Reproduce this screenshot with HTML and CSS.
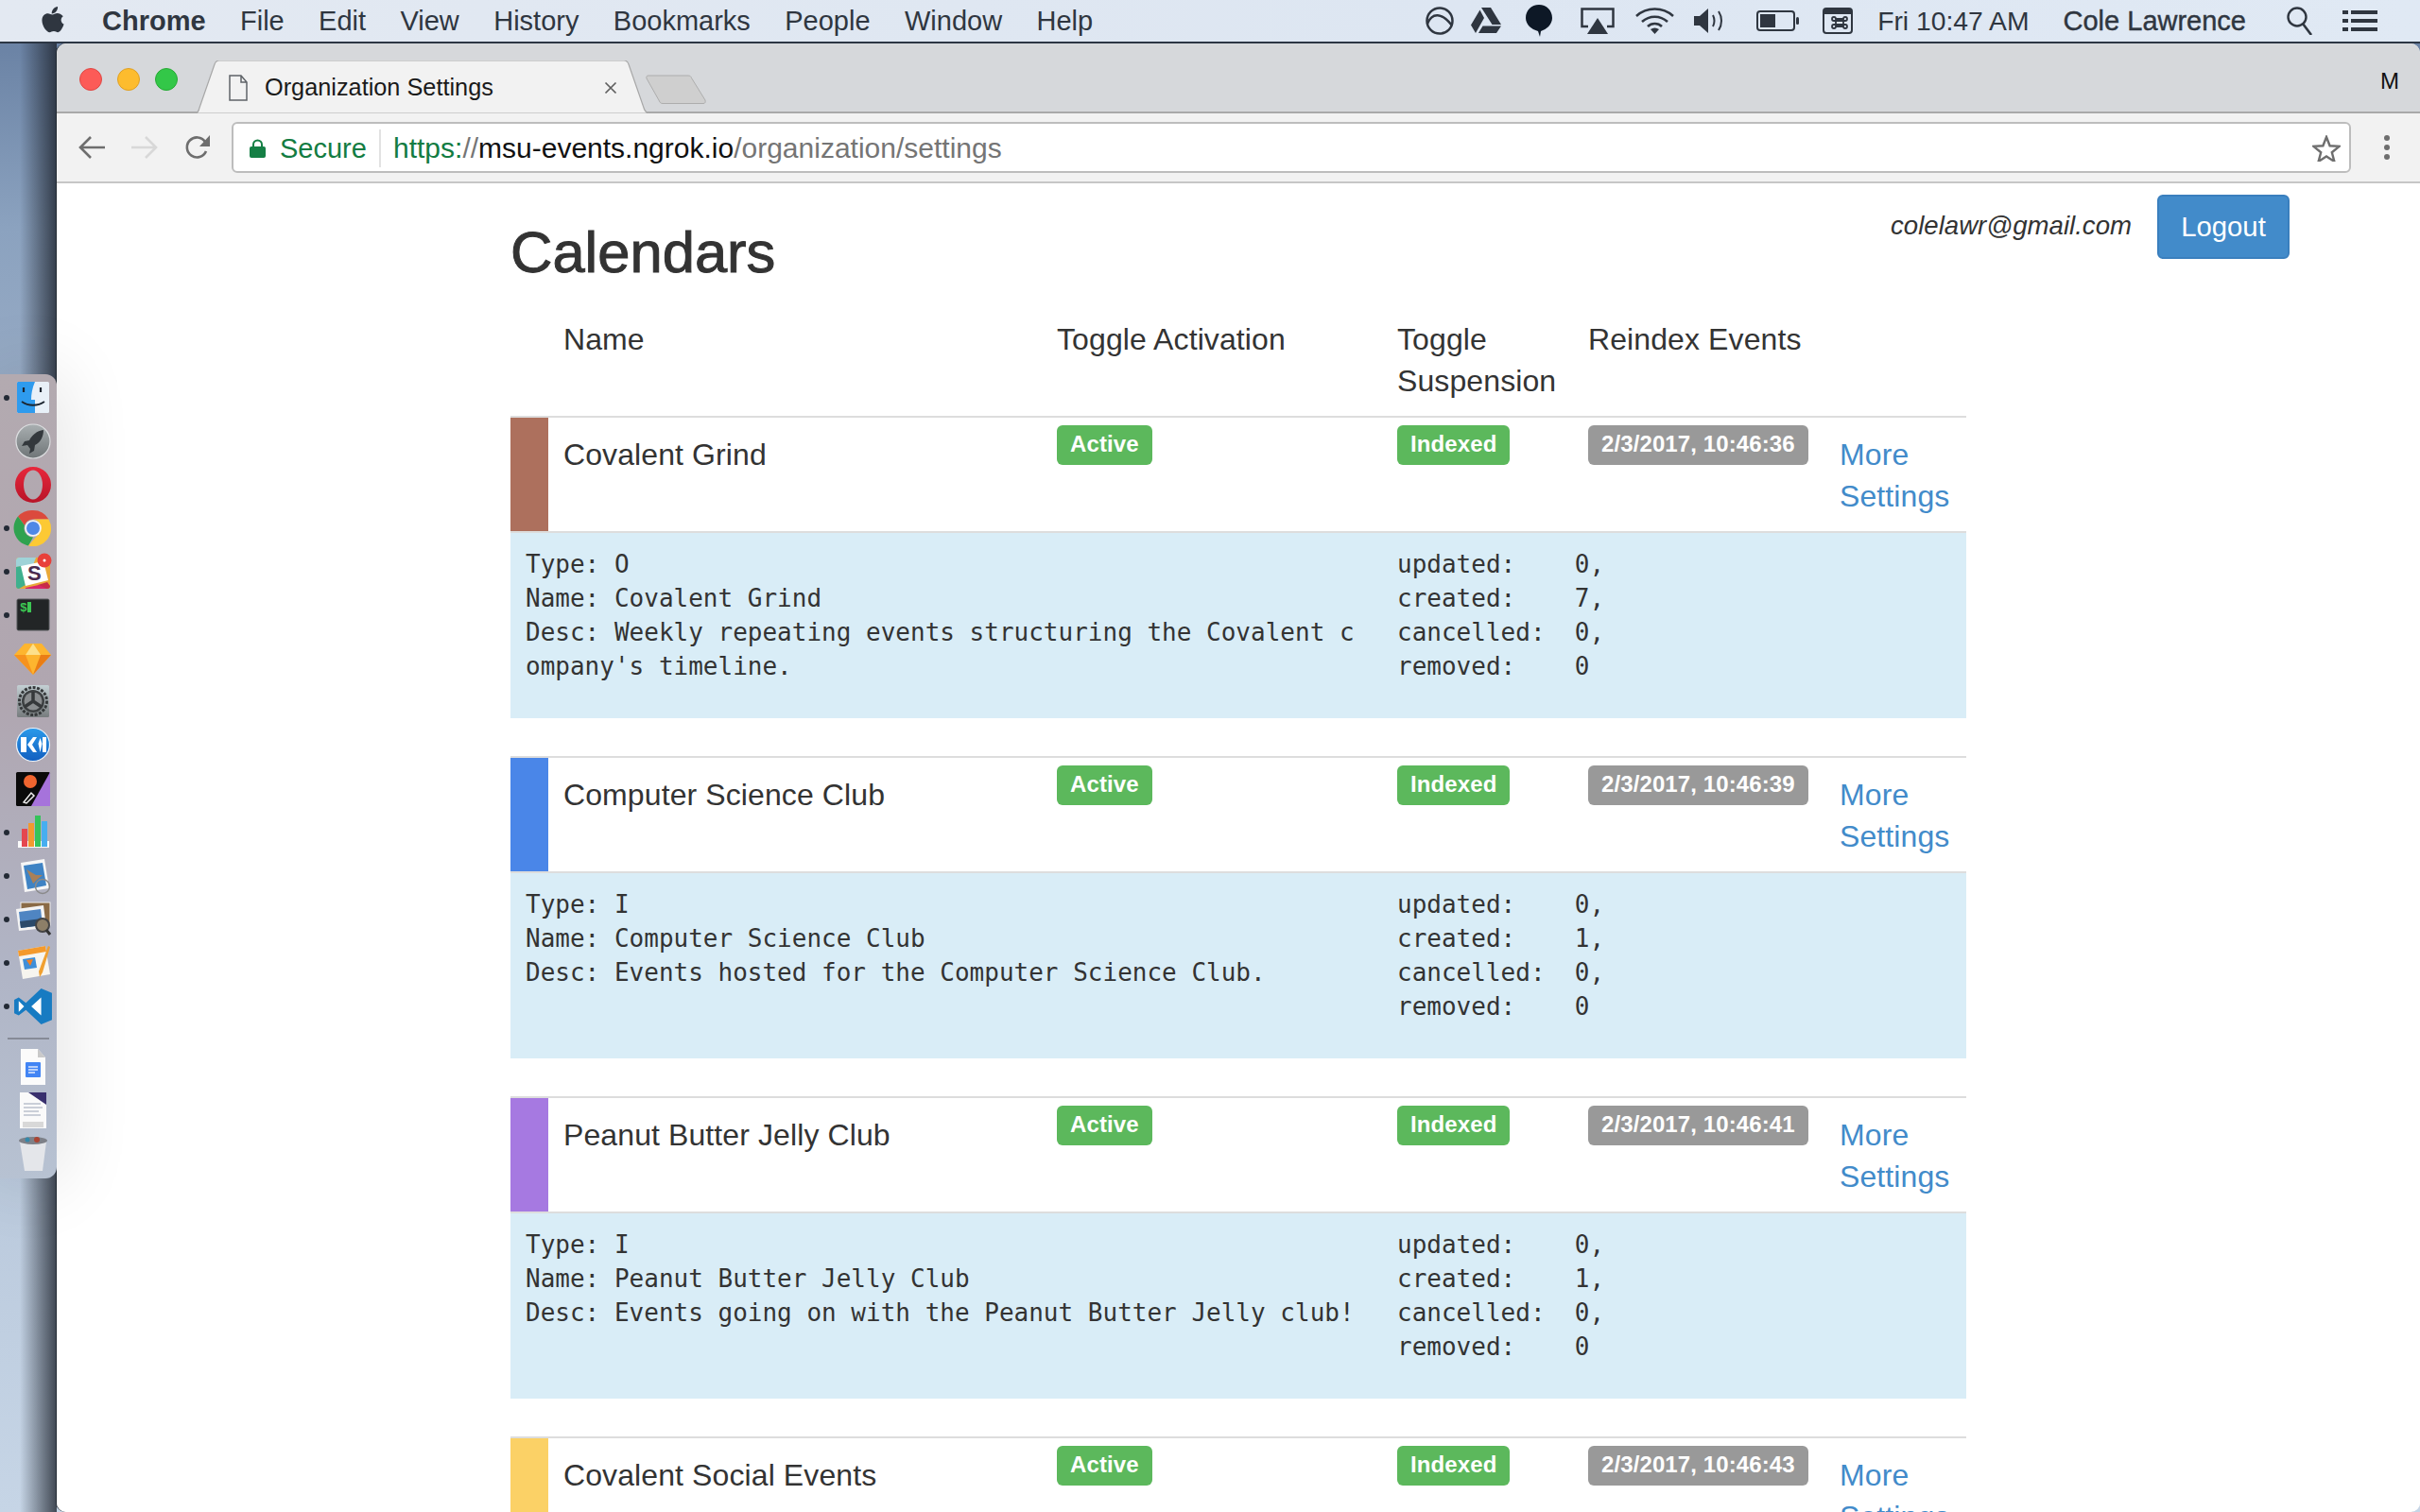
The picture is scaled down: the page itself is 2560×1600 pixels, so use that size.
FILE: index.html
```html
<!DOCTYPE html>
<html lang="en">
<head>
<meta charset="utf-8">
<title>Organization Settings</title>
<link rel="stylesheet" href="styles.css">
</head>
<body>
<div class="desktop">
  <header class="menubar">
    <svg class="apple" viewBox="0 0 24 28"><path fill="#2f3640" d="M17 0c.2 2-.6 3.600-1.600 4.800-1 1.200-2.600 2.100-4.100 2-.2-1.700.6-3.400 1.500-4.500C13.800 1.100 15.600.2 17 0zM22 9.500c-2.600 1.600-2.200 6 .9 7.300-.8 2.800-3.300 7.700-5.700 7.700-1.500 0-2-1-3.900-1-2 0-2.600 1-4 1C6.500 24.500 2 18.500 2 13c0-4.500 3-6.500 5.600-6.500 1.800 0 3 1.200 4.300 1.200 1.200 0 2.700-1.400 4.800-1.400 1.800 0 3.700 1 5.300 2.700z"/></svg>
    <nav class="menus">
      <span class="menu menu-app">Chrome</span>
      <span class="menu">File</span>
      <span class="menu">Edit</span>
      <span class="menu">View</span>
      <span class="menu">History</span>
      <span class="menu">Bookmarks</span>
      <span class="menu">People</span>
      <span class="menu">Window</span>
      <span class="menu">Help</span>
    </nav>
    <div class="status">
      <svg class="st st-ring" viewBox="0 0 30 30"><circle cx="15" cy="15" r="13.500" fill="none" stroke="#2f3640" stroke-width="2.500"/><path d="M2 18C7 6 17 6 28 20" fill="none" stroke="#2f3640" stroke-width="2.500"/></svg>
      <svg class="st st-drive" viewBox="0 0 32 28"><path fill="#2f3640" d="M11 0h10l11 18h-9.500zM9.500 2.500 14 11 5 27 0 18.500zM8 27l4.500-7.500H32L27 27z"/></svg>
      <svg class="st st-balloon" viewBox="0 0 28 34"><path fill="#0d1826" d="M14 0c8 0 14 6 14 14 0 7-6 12-12 14l-1 6-2-6C6 26 0 21 0 14 0 6 6 0 14 0z"/></svg>
      <svg class="st st-air" viewBox="0 0 36 28"><path fill="none" stroke="#2f3640" stroke-width="2.500" d="M8 20H1.500V1.500h33V20H28"/><path fill="#2f3640" d="M18 11l11 17H7z"/></svg>
      <svg class="st st-wifi" viewBox="0 0 43 28"><g fill="none" stroke="#2f3640" stroke-width="2.600"><path d="M2 9c11-10 28-10 39 0"/><path d="M8 15c8-7 19-7 27 0"/><path d="M14 20c4-4 11-4 15 0"/></g><path fill="#2f3640" d="M21.500 28l-4.500-5c3-2 6-2 9 0z"/></svg>
      <svg class="st st-vol" viewBox="0 0 34 26"><path fill="#2f3640" d="M0 8h6l9-8v26l-9-8H0z"/><g fill="none" stroke="#2f3640" stroke-width="2"><path d="M20 7c2 4 2 8 0 12"/><path d="M26 3c4 6 4 14 0 20"/></g></svg>
      <svg class="st st-bat" viewBox="0 0 46 22"><rect x="1" y="1" width="39" height="20" rx="3" fill="none" stroke="#2f3640" stroke-width="2"/><rect x="4" y="4" width="16" height="14" fill="#2f3640"/><rect x="42" y="7" width="3" height="8" rx="1.500" fill="#2f3640"/></svg>
      <svg class="st st-key" viewBox="0 0 32 28"><rect x="1" y="1" width="30" height="26" rx="3" fill="none" stroke="#2f3640" stroke-width="2"/><rect x="1" y="1" width="30" height="6" fill="#2f3640"/><path fill="none" stroke="#2f3640" stroke-width="1.800" d="M14 12h8v8h-8zM14 12a2 2 0 1 0-2 2h12a2 2 0 1 0-2-2v8a2 2 0 1 0 2-2H12a2 2 0 1 0 2 2z"/></svg>
      <span class="clock">Fri 10:47 AM</span>
      <span class="user">Cole Lawrence</span>
      <svg class="st st-search" viewBox="0 0 28 30"><circle cx="11" cy="11" r="9.500" fill="none" stroke="#2f3640" stroke-width="2.400"/><path d="M17 18l9 12" stroke="#2f3640" stroke-width="2.600"/></svg>
      <svg class="st st-list" viewBox="0 0 37 22"><g fill="#2f3640"><rect width="6" height="4"/><rect x="9" width="28" height="4"/><rect y="9" width="6" height="4"/><rect x="9" y="9" width="28" height="4"/><rect y="18" width="6" height="4"/><rect x="9" y="18" width="28" height="4"/></g></svg>
    </div>
  </header>

  <aside class="dock">
    <div class="slot"><i class="dot"></i>
      <svg class="app" viewBox="0 0 38 38"><rect x="2" y="2" width="34" height="33" rx="1.500" fill="#e8f0f8"/><path d="M2 3.500C2 2.600 2.700 2 3.500 2H21c-3 7-4 13-4 19h4v14H3.500C2.700 35 2 34.400 2 33.500z" fill="#2e9bee"/><path d="M9 8v5M27 8v5" stroke="#1c2530" stroke-width="2.200"/><path d="M7 23c7 5 17 5 24 0" fill="none" stroke="#1c2530" stroke-width="1.800"/></svg>
    </div>
    <div class="slot"><i class="dot off"></i>
      <svg class="app" viewBox="0 0 38 38"><defs><linearGradient id="g-rocket" x1="0" y1="0" x2="0" y2="1"><stop offset="0" stop-color="#a9afb1"/><stop offset="1" stop-color="#6f7577"/></linearGradient></defs><circle cx="19" cy="19" r="18" fill="url(#g-rocket)" stroke="#dcdee0" stroke-width="1.200"/><path d="M30 7c-7 1-12 5-15 11l-5 1-3 5 6-1 3 4-1 5 5-3 1-6c6-3 9-9 9-16z" fill="#33383c"/></svg>
    </div>
    <div class="slot"><i class="dot off"></i>
      <svg class="app" viewBox="0 0 38 38"><defs><linearGradient id="g-opera" x1="0" y1="0" x2="0" y2="1"><stop offset="0" stop-color="#e8283c"/><stop offset="1" stop-color="#b81428"/></linearGradient></defs><path fill-rule="evenodd" fill="url(#g-opera)" d="M19 0a19 19 0 1 1 0 38 19 19 0 0 1 0-38zm0 3.500c-5.500 0-10 7-10 15.500s4.500 15.500 10 15.500 10-7 10-15.500S24.500 3.500 19 3.500z"/></svg>
    </div>
    <div class="slot"><i class="dot"></i>
      <svg class="app" viewBox="0 0 38 38"><path fill="#db4a3d" d="M19 0a19 19 0 0 1 16.500 9.500H19a9.500 9.500 0 0 0-9 6.500L3 6.500A19 19 0 0 1 19 0z"/><path fill="#2fa24f" d="M3 6.500 10 16a9.500 9.500 0 0 0 9 12.500L14 37.400A19 19 0 0 1 3 6.500z"/><path fill="#fcc934" d="M35.500 9.500A19 19 0 0 1 14 37.400L24 26a9.500 9.500 0 0 0-5-16.500z"/><circle cx="19" cy="19" r="8.800" fill="#f4f4f4"/><circle cx="19" cy="19" r="7" fill="#4f88e6"/></svg>
    </div>
    <div class="slot"><i class="dot"></i>
      <svg class="app" viewBox="0 0 38 38"><rect x="1" y="4" width="36" height="33" rx="3" fill="#e9a93a"/><path d="M1 7c0-2 1-3 3-3h18l-3 8L1 14z" fill="#9fd3d8"/><path d="M1 14l6-1 4 20-7 4c-2 0-3-1-3-3z" fill="#3fb08e"/><path d="M24 33l10-3 3 4c0 2-1 3-3 3H24z" fill="#c72c48"/><path d="M6 13 30 8l5 20-24 6z" fill="#fff"/><path d="M11 36l14-3 9 4H11z" fill="#d9266b"/><text x="13" y="28" class="slack-s">S</text><circle cx="31" cy="7" r="7.500" fill="#e8403a"/><circle cx="31" cy="7" r="1.500" fill="#fff"/></svg>
    </div>
    <div class="slot"><i class="dot"></i>
      <svg class="app" viewBox="0 0 38 38"><rect x="2" y="2" width="34" height="33" rx="1.500" fill="#222526" stroke="#55585a"/><text x="5" y="15" class="term">$</text><rect x="13" y="5" width="4" height="11" fill="#3cc653"/></svg>
    </div>
    <div class="slot"><i class="dot off"></i>
      <svg class="app" viewBox="0 0 38 38"><path fill="#fdb52f" d="M10 3h18l10 12-19 21L-1 15z"/><path fill="#fde08a" d="M19 3l-8 12h16z"/><path fill="#f6921e" d="M-1 15h12l8 21z"/><path fill="#ea7d15" d="M38 15H27l-8 21z"/></svg>
    </div>
    <div class="slot"><i class="dot off"></i>
      <svg class="app" viewBox="0 0 38 38"><defs><linearGradient id="g-prefs" x1="0" y1="0" x2="0" y2="1"><stop offset="0" stop-color="#c4d0d4"/><stop offset="1" stop-color="#777c7e"/></linearGradient></defs><rect x="2" y="1" width="34" height="34" rx="1.500" fill="url(#g-prefs)"/><circle cx="19" cy="18" r="14.500" fill="none" stroke="#35383a" stroke-width="3" stroke-dasharray="3 1.500"/><circle cx="19" cy="18" r="12" fill="#3d4042"/><circle cx="19" cy="18" r="9.500" fill="#8a8d8f"/><path d="M19 18V8M19 18l-9 6M19 18l9 6" stroke="#35383a" stroke-width="3.500"/></svg>
    </div>
    <div class="slot"><i class="dot off"></i>
      <svg class="app" viewBox="0 0 38 38"><defs><linearGradient id="g-kite" x1="0" y1="0" x2="0" y2="1"><stop offset="0" stop-color="#2a9aea"/><stop offset="1" stop-color="#125fc0"/></linearGradient></defs><circle cx="19" cy="18" r="17.500" fill="url(#g-kite)" stroke="#eaf2fa" stroke-width="1.200"/><path fill="#fff" d="M6 10h6v16H6zM13 18l6-8h4l-5 8 5 8h-4zM29 10h4v16h-4zM26.500 11l2 6-2 9-2-9z"/></svg>
    </div>
    <div class="slot"><i class="dot off"></i>
      <svg class="app" viewBox="0 0 38 38"><rect x="1" y="1" width="36" height="36" rx="1.500" fill="#0a0a0a"/><path d="M37 1v36H17z" fill="#a673db"/><circle cx="16" cy="11" r="7" fill="#f0652f"/><path d="M9 33l8-10 3 3-8 8z" fill="none" stroke="#eee" stroke-width="1.500"/></svg>
    </div>
    <div class="slot"><i class="dot"></i>
      <svg class="app" viewBox="0 0 38 38"><path d="M3 28h33v7H3z" fill="#fafafa"/><rect x="7" y="15" width="6" height="19" fill="#e5474f"/><rect x="14" y="9" width="6" height="25" fill="#f29a2e"/><rect x="21" y="1" width="6" height="33" fill="#35c35a"/><rect x="28" y="7" width="6" height="27" fill="#47aef0"/></svg>
    </div>
    <div class="slot"><i class="dot"></i>
      <svg class="app" viewBox="0 0 38 38"><path d="M6 5l25-4 5 31-26 4z" fill="#f6f6f6"/><path d="M9 8l20-3 4 24-20 4z" fill="#3f83c4"/><path d="M12 12l10 6 7 0-6 5-4 4-3-7z" fill="#a98058"/><circle cx="29" cy="30" r="7.500" fill="none" stroke="#8a8a8a" stroke-width="1.500"/></svg>
    </div>
    <div class="slot"><i class="dot"></i>
      <svg class="app" viewBox="0 0 38 38"><rect x="6" y="1" width="31" height="24" fill="#8a6a46" stroke="#eee"/><path d="M1 8l29-4 3 24-29 3z" fill="#f4f4f4"/><path d="M4 11l23-3 2 17-23 3z" fill="#4f85c2"/><path d="M5 21l23-3 1 7-23 3z" fill="#2b4a6a"/><circle cx="29" cy="25" r="7" fill="#8d7f68" stroke="#444" stroke-width="2"/><path d="M33 30l4 5" stroke="#333" stroke-width="3"/></svg>
    </div>
    <div class="slot"><i class="dot"></i>
      <svg class="app" viewBox="0 0 38 38"><path d="M3 6l29-5 5 30-29 5z" fill="#f7f5ef"/><path d="M3 6l29-5 1 6L4 12z" fill="#f49a2c"/><path d="M8 15l13-2 2 11-13 2z" fill="#3f8fd8"/><path d="M12 16l7-1-3 7z" fill="#f07f22"/><path d="M35 1l2 1-8 27-3 5-1-6z" fill="#f0a030"/></svg>
    </div>
    <div class="slot"><i class="dot"></i>
      <svg class="app app-wide" viewBox="0 0 42 40"><path fill="#177bc2" d="M30 0l12 5v30l-12 5-17-16-8 6-5-2.500V12.500L5 10l8 6z"/><path fill="#fff" d="M5 14v12l6-6zM30 10v20l-11-10z"/></svg>
    </div>
    <div class="dock-sep"></div>
    <div class="slot"><i class="dot off"></i>
      <svg class="app" viewBox="0 0 38 38"><path d="M6 0h18l8 9v29H6z" fill="#fbfbfb"/><path d="M24 0l8 9h-8z" fill="#c9c9c9"/><rect x="11" y="14" width="16" height="16" rx="1" fill="#4285f4"/><path d="M14 19h10M14 22h10M14 25h7" stroke="#dfe9fb" stroke-width="1.300"/></svg>
    </div>
    <div class="slot"><i class="dot off"></i>
      <svg class="app" viewBox="0 0 38 38"><rect x="5" y="0" width="28" height="38" fill="#fafafa"/><path d="M14 0h19v13z" fill="#39306e"/><path d="M9 12h18M9 16h20M9 20h16M9 24h18" stroke="#9aa3b5" stroke-width="1.200"/><rect x="8" y="31" width="22" height="6" fill="#d8d8d8"/></svg>
    </div>
    <div class="slot"><i class="dot off"></i>
      <svg class="app" viewBox="0 0 38 38"><path d="M5 6h28l-4 31H10z" fill="#e4e6ea"/><ellipse cx="19" cy="5" rx="15" ry="4" fill="#7d8088"/><circle cx="13" cy="4" r="2.500" fill="#38a"/><circle cx="23" cy="4" r="3" fill="#a43"/></svg>
    </div>
  </aside>

  <section class="window">
    <div class="tabstrip">
      <i class="light light-r"></i><i class="light light-y"></i><i class="light light-g"></i>
      <div class="tab">
        <svg class="tab-shape" viewBox="0 0 484 56" preserveAspectRatio="none"><path d="M0 56 C4 56 5 54 6 50 L22 4 C23 1 24 0 27 0 H455 C458 0 459 1 460 4 L476 50 C477 54 480 56 484 56z" fill="#f2f2f2" stroke="#a8a8a8" stroke-width="1.200"/></svg>
        <svg class="tab-page" viewBox="0 0 20 28"><path d="M1 1h12l6 7v19H1z M13 1v7h6" fill="none" stroke="#5f6368" stroke-width="1.500"/></svg>
        <span class="tab-title">Organization Settings</span>
        <svg class="tab-close" viewBox="0 0 14 14"><path d="M1.500 1.500l11 11M12.500 1.500l-11 11" stroke="#5f5f5f" stroke-width="1.700"/></svg>
      </div>
      <svg class="newtab" viewBox="0 0 64 31"><path d="M3 1h42c2 0 3 1 3.500 2.500L63 27c.5 2 0 3.500-2 3.500H18c-2 0-3-1-3.500-2.500L1 4C.5 2 1 1 3 1z" fill="#cfcfcf" stroke="#adadad"/></svg>
      <span class="profile">M</span>
    </div>
    <div class="toolbar">
      <svg class="tb tb-back" viewBox="0 0 28 26"><path d="M13 2 2 13l11 11M2 13h26" fill="none" stroke="#6e6e6e" stroke-width="2.600"/></svg>
      <svg class="tb tb-fwd" viewBox="0 0 28 26"><path d="M15 2l11 11-11 11M26 13H0" fill="none" stroke="#d8d8d8" stroke-width="2.600"/></svg>
      <svg class="tb tb-reload" viewBox="0 0 28 26"><path d="M23 17a10.500 10.500 0 1 1-1-10" fill="none" stroke="#6e6e6e" stroke-width="2.600"/><path d="M27 0v12H16z" fill="#6e6e6e"/></svg>
      <div class="omnibox">
        <svg class="lock" viewBox="0 0 17 20"><path d="M4 9V6a4.500 4.500 0 0 1 9 0v3" fill="none" stroke="#157f45" stroke-width="2"/><rect y="8" width="17" height="12" rx="2" fill="#157f45"/></svg>
        <span class="secure">Secure</span>
        <i class="omni-div"></i>
        <span class="url"><span class="u-scheme">https:</span><span class="u-slash">//</span><span class="u-host">msu-events.ngrok.io</span><span class="u-path">/organization/settings</span></span>
        <svg class="star" viewBox="0 0 30 28"><path d="M15 2l3.600 9.300 10 .6-7.800 6.300 2.600 9.700L15 22.500 6.600 27.900l2.600-9.700L1.400 11.900l10-.6z" fill="none" stroke="#6e6e6e" stroke-width="2.400"/></svg>
      </div>
      <div class="kebab"><i></i><i></i><i></i></div>
    </div>
    <div class="page">
      <div class="auth">
        <em class="email">colelawr@gmail.com</em>
        <button class="logout">Logout</button>
      </div>
      <main class="main">
        <h1 class="title">Calendars</h1>
        <div class="cal-head">
          <span class="cell cell-name">Name</span>
          <span class="cell">Toggle Activation</span>
          <span class="cell">Toggle Suspension</span>
          <span class="cell">Reindex Events</span>
        </div>

        <article class="cal">
          <div class="cal-row">
            <i class="swatch swatch-brown"></i>
            <span class="cell">Covalent Grind</span>
            <span class="cell-badge"><span class="badge badge-ok">Active</span></span>
            <span class="cell-badge"><span class="badge badge-ok">Indexed</span></span>
            <span class="cell-badge"><span class="badge badge-time">2/3/2017, 10:46:36</span></span>
            <a class="cell more" href="#">More Settings</a>
          </div>
          <div class="cal-info">
<pre class="info-left">Type: O
Name: Covalent Grind
Desc: Weekly repeating events structuring the Covalent company's timeline.</pre>
<pre class="info-right">updated:    0,
created:    7,
cancelled:  0,
removed:    0</pre>
          </div>
        </article>

        <article class="cal">
          <div class="cal-row">
            <i class="swatch swatch-blue"></i>
            <span class="cell">Computer Science Club</span>
            <span class="cell-badge"><span class="badge badge-ok">Active</span></span>
            <span class="cell-badge"><span class="badge badge-ok">Indexed</span></span>
            <span class="cell-badge"><span class="badge badge-time">2/3/2017, 10:46:39</span></span>
            <a class="cell more" href="#">More Settings</a>
          </div>
          <div class="cal-info">
<pre class="info-left">Type: I
Name: Computer Science Club
Desc: Events hosted for the Computer Science Club.</pre>
<pre class="info-right">updated:    0,
created:    1,
cancelled:  0,
removed:    0</pre>
          </div>
        </article>

        <article class="cal">
          <div class="cal-row">
            <i class="swatch swatch-purple"></i>
            <span class="cell">Peanut Butter Jelly Club</span>
            <span class="cell-badge"><span class="badge badge-ok">Active</span></span>
            <span class="cell-badge"><span class="badge badge-ok">Indexed</span></span>
            <span class="cell-badge"><span class="badge badge-time">2/3/2017, 10:46:41</span></span>
            <a class="cell more" href="#">More Settings</a>
          </div>
          <div class="cal-info">
<pre class="info-left">Type: I
Name: Peanut Butter Jelly Club
Desc: Events going on with the Peanut Butter Jelly club!</pre>
<pre class="info-right">updated:    0,
created:    1,
cancelled:  0,
removed:    0</pre>
          </div>
        </article>

        <article class="cal">
          <div class="cal-row">
            <i class="swatch swatch-yellow"></i>
            <span class="cell">Covalent Social Events</span>
            <span class="cell-badge"><span class="badge badge-ok">Active</span></span>
            <span class="cell-badge"><span class="badge badge-ok">Indexed</span></span>
            <span class="cell-badge"><span class="badge badge-time">2/3/2017, 10:46:43</span></span>
            <a class="cell more" href="#">More Settings</a>
          </div>
        </article>
      </main>
    </div>
  </section>
</div>
</body>
</html>
```

FILE: styles.css
```css
* { box-sizing: border-box; }
html, body { margin: 0; padding: 0; }
body { font-family: "Liberation Sans", Arial, sans-serif; color: #333; }

.desktop {
  position: relative;
  width: 2560px;
  height: 1600px;
  overflow: hidden;
  background:
    linear-gradient(to right, rgba(30,36,46,0) 35%, rgba(30,36,46,.8) 100%) 0 0 / 60px 100% no-repeat,
    linear-gradient(to bottom, #6b83a5 3%, #8ba2bf 15%, #a7b6cc 40%, #c6d5e6 100%);
}

/* macOS menu bar */
.menubar {
  display: flex;
  align-items: center;
  height: 46px;
  padding: 0 45px 0 42px;
  background: linear-gradient(to right, #e3e9f2, #dde6f2 60%, #e0e9f4);
  border-bottom: 2px solid #2c3644;
  color: #2f3640;
  font-size: 29px;
}
.apple { width: 27px; height: 31px; margin-right: 39px; }
.menus { display: flex; gap: 36.4px; }
.menu-app { font-weight: 700; }
.status { display: flex; align-items: center; margin-left: auto; }
.st { display: block; flex: none; }
.st-ring { width: 30px; height: 30px; margin-right: 18px; }
.st-drive { width: 32px; height: 28px; margin-right: 26px; }
.st-balloon { width: 28px; height: 34px; margin-right: 30px; }
.st-air { width: 36px; height: 28px; margin-right: 21px; }
.st-wifi { width: 43px; height: 28px; margin-right: 20px; }
.st-vol { width: 34px; height: 26px; margin-right: 32px; }
.st-bat { width: 46px; height: 22px; margin-right: 24px; }
.st-key { width: 32px; height: 28px; margin-right: 26px; }
.clock { margin-right: 36px; white-space: nowrap; font-size: 28.3px; }
.user { margin-right: 43px; white-space: nowrap; font-weight: 500; -webkit-text-stroke: .4px #2f3640; }
.st-search { width: 28px; height: 30px; margin-right: 31px; }
.st-list { width: 37px; height: 22px; }

/* Dock */
.dock {
  position: absolute;
  z-index: 3;
  left: 0;
  top: 396px;
  width: 60px;
  height: 851px;
  padding-top: 2px;
  border-radius: 0 12px 12px 0;
  background: linear-gradient(to bottom, #b3aab0 0%, #b0a6b0 40%, #b0b5c6 75%, #b7c2d2 100%);
  box-shadow: 0 0 80px rgba(0,0,0,.14);
  display: flex;
  flex-direction: column;
}
.slot { display: flex; align-items: center; height: 46px; padding-left: 4px; }
.dot { flex: none; width: 6px; height: 6px; margin-right: 6px; border-radius: 50%; background: #232a35; }
.dot.off { visibility: hidden; }
.app { flex: none; width: 38px; height: 38px; display: block; overflow: visible; }
.app-wide { width: 42px; margin-left: -2px; }
.dock-sep { height: 18px; margin: 2px 8px -2px; flex: none; }
.dock-sep::after { content: ""; display: block; height: 2px; margin-top: 8px; background: #868a97; }
.slack-s { font: 700 22px "Liberation Sans", sans-serif; fill: #4a2a4f; }
.term { font: 700 13px "Liberation Mono", monospace; fill: #3cc653; }

/* Browser window */
.window {
  position: absolute;
  z-index: 2;
  left: 60px;
  top: 46px;
  width: 2500px;
  height: 1554px;
  border-radius: 10px;
  overflow: hidden;
  background: #fff;
  box-shadow: -1px 0 0 #222a33;
  display: flex;
  flex-direction: column;
}
.tabstrip {
  flex: none;
  display: flex;
  align-items: flex-end;
  height: 74px;
  padding-left: 24px;
  background: #d6d8db;
  border-bottom: 2px solid #a9a9a9;
}
.light { flex: none; align-self: flex-start; width: 24px; height: 24px; margin: 26px 16px 0 0; border-radius: 50%; }
.light-r { background: #fc5b57; border: 1px solid #df4744; }
.light-y { background: #fdbc2e; border: 1px solid #dfa023; }
.light-g { background: #33c748; margin-right: 17px; border: 1px solid #27aa35; }
.tab { position: relative; flex: none; display: flex; align-items: center; width: 484px; height: 56px; margin-bottom: -2px; padding: 2px 0 0 37px; }
.tab-shape { position: absolute; left: 0; top: 0; width: 100%; height: 100%; }
.tab-page { position: relative; width: 20px; height: 28px; margin-right: 18px; flex: none; }
.tab-title { position: relative; top: -1px; font-size: 25.3px; color: #1a1a1a; white-space: nowrap; flex: 1; }
.tab-close { position: relative; width: 14px; height: 14px; margin-right: 36px; flex: none; }
.newtab { flex: none; align-self: flex-start; width: 64px; height: 31px; margin: 33px 0 0 -6px; }
.profile { align-self: flex-start; margin: 26px 22px 0 auto; font-size: 24px; line-height: 28px; color: #111; }

.toolbar {
  flex: none;
  display: flex;
  align-items: center;
  height: 74px;
  padding: 0 0 0 23px;
  background: #f2f2f2;
  border-bottom: 2px solid #c6c6c6;
}
.tb { flex: none; width: 28px; height: 26px; }
.tb-back { margin-right: 28px; }
.tb-fwd { margin-right: 28px; }
.tb-reload { margin-right: 22px; }
.omnibox {
  flex: none;
  display: flex;
  align-items: center;
  width: 2242px;
  height: 54px;
  padding: 2px 9px 0 17px;
  background: #fff;
  border: 2px solid #bdbdbd;
  border-radius: 6px;
  font-size: 29px;
}
.lock { width: 17px; height: 20px; margin-right: 15px; flex: none; }
.secure { color: #137c42; width: 105px; }
.omni-div { width: 2px; height: 40px; margin-right: 13px; background: #e2e2e2; flex: none; }
.url { white-space: nowrap; flex: 1; font-size: 30px; }
.u-scheme { color: #137c42; }
.u-slash, .u-path { color: #757575; }
.u-host { color: #111; }
.star { width: 30px; height: 28px; flex: none; }
.kebab { display: flex; flex-direction: column; gap: 4px; margin-left: 35px; }
.kebab i { width: 6px; height: 6px; border-radius: 50%; background: #6e6e6e; }

/* Page */
.page { flex: 1; overflow: hidden; background: #fff; }
.auth { float: right; display: flex; align-items: center; gap: 27px; margin: 12px 138px 0 0; }
.email { position: relative; top: -1px; font-size: 27.6px; font-style: italic; color: #333; }
.logout {
  width: 140px;
  height: 68px;
  padding: 0;
  border: 2px solid #3a7fbe;
  border-radius: 6px;
  background: #428bca;
  color: #fff;
  font: 29.3px "Liberation Sans", Arial, sans-serif;
}
.main { width: 1540px; margin-left: 480px; padding-top: 40px; }
.title { margin: 0 0 21px; font-size: 61.5px; line-height: 66px; font-weight: 400; color: #333; -webkit-text-stroke: 1px #333; }

.cal-head, .cal-row {
  display: grid;
  grid-template-columns: 40px 522px 360px 202px 265px 151px;
  font-size: 32px;
  line-height: 44px;
  letter-spacing: .1px;
}
.cal-head { height: 119px; }
.cell { display: block; padding: 16px 16px 0; }
.cal-row .cell { padding-top: 17px; }
.cell-name { grid-column: 2; }
.cal { margin-bottom: 40px; border-top: 2px solid #ddd; }
.cal-row { height: 122px; border-bottom: 2px solid #ddd; }
.swatch { display: block; }
.swatch-brown { background: #ad705d; }
.swatch-blue { background: #4a86e8; }
.swatch-purple { background: #a679e1; }
.swatch-yellow { background: #fbd166; }
.cell-badge { padding: 8px 16px 0; line-height: 0; white-space: nowrap; }
.badge {
  display: inline-block;
  height: 42px;
  padding: 7px 14px 0;
  border-radius: 6px;
  color: #fff;
  font-size: 24px;
  line-height: 26px;
  font-weight: 700;
  letter-spacing: .1px;
}
.badge-ok { background: #5cb85c; }
.badge-time { background: #999; }
.more { color: #428bca; text-decoration: none; padding-left: 17px; padding-right: 0; }
.cal-info {
  display: grid;
  grid-template-columns: 922px 1fr;
  height: 196px;
  padding: 15px 16px 0;
  background: #d9edf7;
}
.cal-info pre {
  margin: 0;
  font: 26px/36px "DejaVu Sans Mono", "Liberation Mono", monospace;
  color: #333;
}
.info-left { width: 890px; white-space: pre-wrap; word-break: break-all; }
```
